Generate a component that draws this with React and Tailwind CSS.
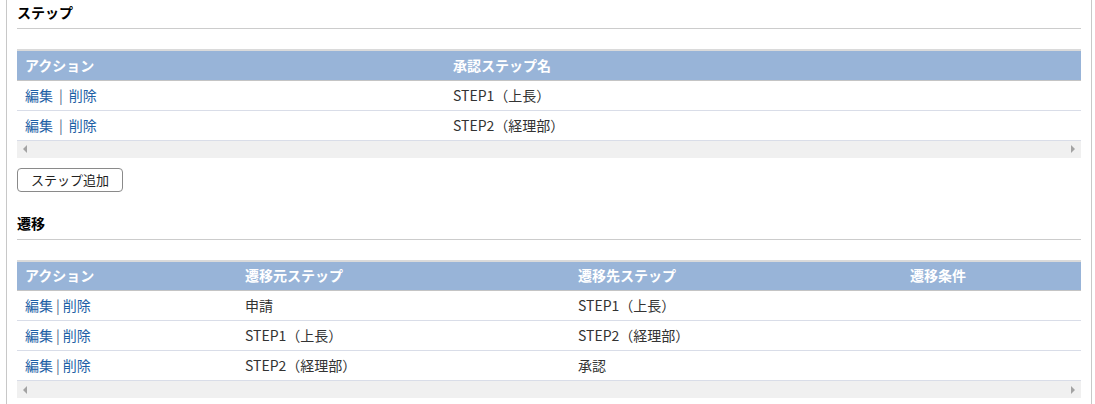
const FONT = "font-['Noto_Sans_CJK_JP','Noto_Sans',sans-serif]";

const steps = ["STEP1（上長）", "STEP2（経理部）"];

const transitions = [
  { from: "申請", to: "STEP1（上長）", cond: "" },
  { from: "STEP1（上長）", to: "STEP2（経理部）", cond: "" },
  { from: "STEP2（経理部）", to: "承認", cond: "" },
];

function Heading({ children }) {
  return (
    <div className="pt-[2px] pb-[6px] leading-[20px] text-[14px] font-bold text-black border-b border-[#cccccc]">
      {children}
    </div>
  );
}

function ScrollBar() {
  return (
    <div className="flex items-center justify-between h-[17px] bg-[#f0f0f0] px-[6px]">
      <span className="w-0 h-0 border-y-[4px] border-y-transparent border-r-[4px] border-r-[#a3a3a3]" />
      <span className="w-0 h-0 border-y-[4px] border-y-transparent border-l-[4px] border-l-[#a3a3a3]" />
    </div>
  );
}

function Actions({ wide }) {
  return (
    <span className="text-[#1d5fa6]">
      <a href="#" onClick={(e) => e.preventDefault()}>編集</a>
      <span className={wide ? "mx-[6px] text-[#4f6b8a]" : "mx-[3px] text-[#4f6b8a]"}>|</span>
      <a href="#" onClick={(e) => e.preventDefault()}>削除</a>
    </span>
  );
}

export default function App() {
  return (
    <div className={`${FONT} bg-white w-[1095px] h-[404px] overflow-hidden`}>
      <div className="ml-[6px] w-[1086px] h-[404px] border-x border-[#c8c8c8] px-[10px]">
        <Heading>ステップ</Heading>

        <div className="mt-[20px] border-t-2 border-[#dadada]">
          <table className="w-full border-collapse text-[14px]">
            <thead>
              <tr className="bg-[#98b4d8] text-white border-b border-[#c4c4c4]">
                <th className="w-[428px] h-[29px] px-[8px] text-left font-bold">アクション</th>
                <th className="px-[8px] text-left font-bold">承認ステップ名</th>
              </tr>
            </thead>
            <tbody>
              {steps.map((s) => (
                <tr key={s} className="border-b border-[#d9dde8]">
                  <td className="h-[30px] px-[8px]"><Actions wide /></td>
                  <td className="px-[8px] text-[#333333]">{s}</td>
                </tr>
              ))}
            </tbody>
          </table>
          <ScrollBar />
        </div>

        <button className="mt-[10px] w-[106px] h-[24px] rounded-[4px] border border-[#8a8a8a] bg-white text-[13px] text-[#222222] leading-none">
          ステップ追加
        </button>

        <div className="mt-[19px]">
          <Heading>遷移</Heading>
        </div>

        <div className="mt-[20px] border-t-2 border-[#dadada]">
          <table className="w-full border-collapse text-[14px] table-fixed">
            <thead>
              <tr className="bg-[#98b4d8] text-white border-b border-[#c4c4c4]">
                <th className="w-[220px] h-[29px] px-[8px] text-left font-bold">アクション</th>
                <th className="w-[333px] px-[8px] text-left font-bold">遷移元ステップ</th>
                <th className="w-[332px] px-[8px] text-left font-bold">遷移先ステップ</th>
                <th className="px-[8px] text-left font-bold">遷移条件</th>
              </tr>
            </thead>
            <tbody>
              {transitions.map((t, i) => (
                <tr key={i} className="border-b border-[#d9dde8]">
                  <td className="h-[30px] px-[8px]"><Actions /></td>
                  <td className="px-[8px] text-[#333333]">{t.from}</td>
                  <td className="px-[8px] text-[#333333]">{t.to}</td>
                  <td className="px-[8px] text-[#333333]">{t.cond}</td>
                </tr>
              ))}
            </tbody>
          </table>
          <ScrollBar />
        </div>
      </div>
    </div>
  );
}
